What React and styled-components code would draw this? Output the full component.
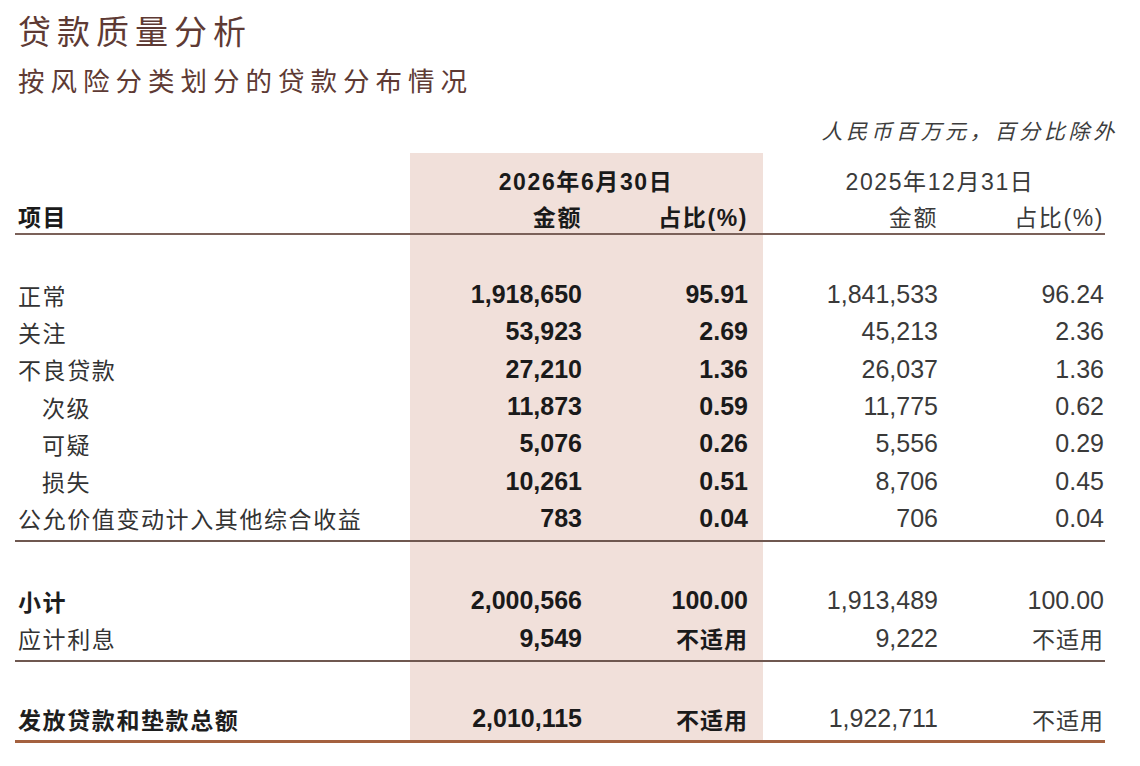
import React from 'react';
import styled, { createGlobalStyle } from 'styled-components';

const Global = createGlobalStyle`
  body {
    margin: 0;
    background: #fff;
    font-family: "Noto Sans CJK SC", "Noto Sans", sans-serif;
  }
`;

const Page = styled.div`
  width: 1140px;
  height: 766px;
  padding: 10px 0 0 18px;
  box-sizing: border-box;
  overflow: hidden;
`;

const Title = styled.h1`
  margin: 0;
  font-size: 33px;
  line-height: 40px;
  font-weight: 400;
  letter-spacing: 6px;
  color: #5e3a34;
`;

const Subtitle = styled.h2`
  margin: 10px 0 0;
  font-size: 26.5px;
  line-height: 40px;
  font-weight: 400;
  letter-spacing: 6px;
  color: #5e3a34;
`;

const Unit = styled.div`
  margin: 15px 22px 0 0;
  text-align: right;
  font-size: 21px;
  line-height: 30px;
  font-style: italic;
  letter-spacing: 3.7px;
  color: #3d3d3d;
`;

// shaded band marks the current-period columns
const Table = styled.div`
  margin: 8px 0 0 -3px;
  width: 1090px;
  background: linear-gradient(
    to right,
    transparent 395px,
    #f1e0da 395px,
    #f1e0da 748px,
    transparent 748px
  );
`;

const Section = styled.div`
  padding: ${p => p.$top}px 0 3px;
  border-bottom: ${p => (p.$last ? '3px solid #a4613f' : '2px solid #6f5850')};
`;

const Head = styled.div`
  border-bottom: 2px solid #7b6159;
  padding: 10px 0 10px;
`;

const Row = styled.div`
  display: grid;
  grid-template-columns: 395px 172px 166px 190px 166px;
  align-items: center;
  height: ${p => p.$h || 37.3}px;
  margin-top: ${p => p.$gap || 0}px;
`;

const Label = styled.div`
  padding-left: ${p => (p.$indent ? 27 : 3)}px;
  font-size: 23px;
  letter-spacing: 1.6px;
  color: ${p => (p.$bold ? '#1e1e1e' : '#333')};
  font-weight: ${p => (p.$bold ? 700 : 400)};
  white-space: nowrap;
`;

const Num = styled.div`
  text-align: right;
  font-family: "Liberation Sans", "Noto Sans CJK SC", sans-serif;
  font-size: 25px;
  font-weight: ${p => (p.$cur ? 700 : 400)};
  color: ${p => (p.$cur ? '#1a1a1a' : '#3a3a3a')};
  white-space: nowrap;
`;

const NA = styled(Num)`
  font-family: "Noto Sans CJK SC", sans-serif;
  font-size: 23px;
  letter-spacing: 1px;
`;

const HeadText = styled.div`
  grid-column: ${p => p.$span || 'auto'};
  text-align: ${p => p.$align || 'right'};
  padding-left: ${p => p.$shift || 0}px;
  font-family: "Liberation Sans", "Noto Sans CJK SC", sans-serif;
  font-size: 23px;
  letter-spacing: 1.6px;
  font-weight: ${p => (p.$cur ? 700 : 400)};
  color: ${p => (p.$cur ? '#1a1a1a' : '#3a3a3a')};
  white-space: nowrap;
`;

const Item = styled(HeadText)`
  text-align: left;
  padding-left: 3px;
  font-family: "Noto Sans CJK SC", sans-serif;
`;

const main = [
  ['正常', '1,918,650', '95.91', '1,841,533', '96.24'],
  ['关注', '53,923', '2.69', '45,213', '2.36'],
  ['不良贷款', '27,210', '1.36', '26,037', '1.36'],
  ['次级', '11,873', '0.59', '11,775', '0.62', true],
  ['可疑', '5,076', '0.26', '5,556', '0.29', true],
  ['损失', '10,261', '0.51', '8,706', '0.45', true],
  ['公允价值变动计入其他综合收益', '783', '0.04', '706', '0.04'],
];

const Value = ({ v, cur }) =>
  /^[\d.,]+$/.test(v) ? <Num $cur={cur}>{v}</Num> : <NA $cur={cur}>{v}</NA>;

const DataRow = ({ r, bold }) => (
  <Row>
    <Label $indent={r[5]} $bold={bold}>{r[0]}</Label>
    <Value v={r[1]} cur />
    <Value v={r[2]} cur />
    <Value v={r[3]} />
    <Value v={r[4]} />
  </Row>
);

export default function App() {
  return (
    <Page>
      <Global />
      <Title>贷款质量分析</Title>
      <Subtitle>按风险分类划分的贷款分布情况</Subtitle>
      <Unit>人民币百万元，百分比除外</Unit>
      <Table>
        <Head>
          <Row $h={24}>
            <div />
            <HeadText $span="2 / 4" $align="center" $shift={14} $cur>2026年6月30日</HeadText>
            <HeadText $span="4 / 6" $align="center" $shift={28}>2025年12月31日</HeadText>
          </Row>
          <Row $h={24} $gap={12}>
            <Item $cur>项目</Item>
            <HeadText $cur>金额</HeadText>
            <HeadText $cur>占比(%)</HeadText>
            <HeadText>金额</HeadText>
            <HeadText>占比(%)</HeadText>
          </Row>
        </Head>
        <Section $top={41}>
          {main.map(r => <DataRow key={r[0]} r={r} />)}
        </Section>
        <Section $top={40}>
          <DataRow r={['小计', '2,000,566', '100.00', '1,913,489', '100.00']} bold />
          <DataRow r={['应计利息', '9,549', '不适用', '9,222', '不适用']} />
        </Section>
        <Section $top={38.5} $last>
          <DataRow r={['发放贷款和垫款总额', '2,010,115', '不适用', '1,922,711', '不适用']} bold />
        </Section>
      </Table>
    </Page>
  );
}
